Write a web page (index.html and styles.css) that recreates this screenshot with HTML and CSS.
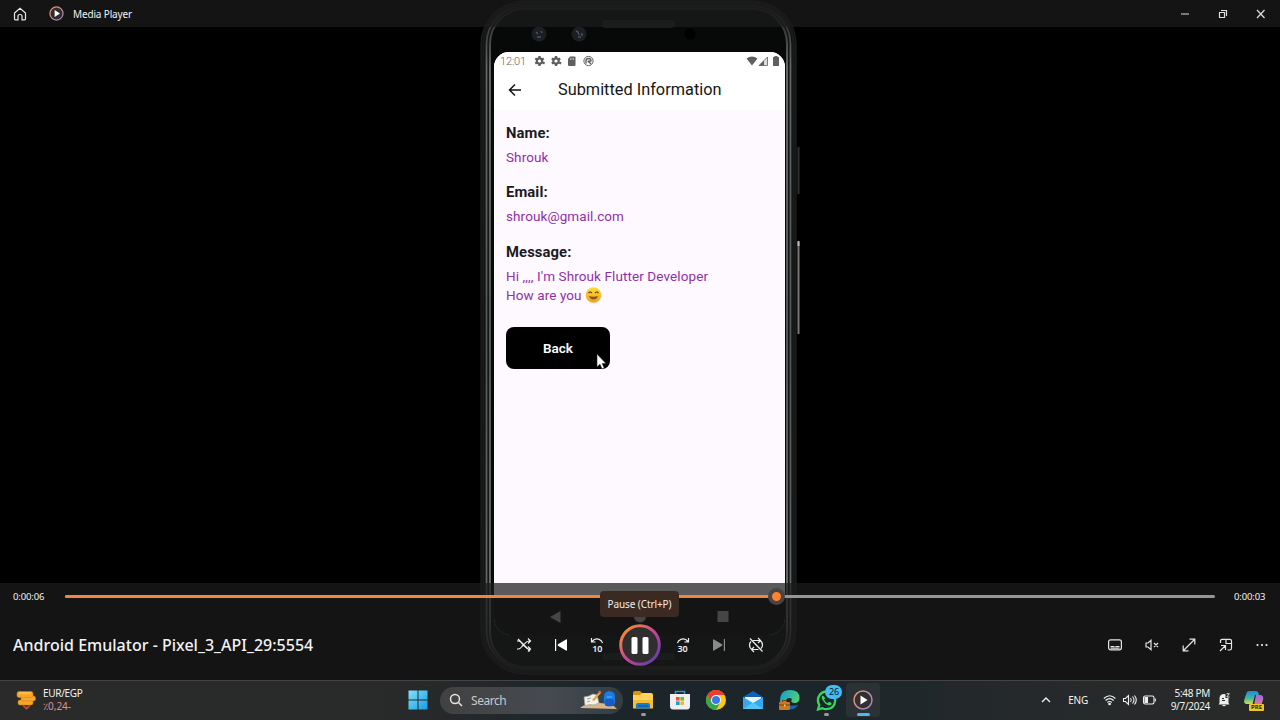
FILE: index.html
```html
<!DOCTYPE html>
<html lang="en">
<head>
<meta charset="utf-8">
<title>Media Player</title>
<link rel="stylesheet" href="styles.css">
</head>
<body>
<main class="window">
  <section class="video">
    <div class="phone">
      <svg class="phone-frame" viewBox="0 0 322 676" fill="none">
        <defs>
          <linearGradient id="rim" x1="0" y1="0" x2="0" y2="1"><stop offset="0" stop-color="#202222"/><stop offset=".09" stop-color="#686a6a"/><stop offset=".5" stop-color="#565959"/><stop offset=".92" stop-color="#686a6a"/><stop offset="1" stop-color="#202222"/></linearGradient>
        </defs>
        <rect x="2" y="1" width="315" height="673" rx="43" fill="#101111" stroke="#222424"/>
        <rect x="4.500" y="3.500" width="310" height="668" rx="41" stroke="#191b1b" stroke-width="2"/>
        <rect x="7.500" y="6" width="304" height="663" rx="38" fill="#161818" stroke="url(#rim)" stroke-width="1.700"/>
        <rect x="11" y="9" width="297" height="658" rx="35" fill="#070808" stroke="url(#rim)" stroke-width="1.900"/>
        <path d="M319.500 147v47" stroke="#303030" stroke-width="2"/>
        <path d="M319.500 242v92" stroke="#777" stroke-width="2"/>
        <path d="M319.500 241v5" stroke="#bbb" stroke-width="2"/>
        <rect x="123" y="20" width="73" height="8" rx="4" fill="#1b1d1d"/>
        <rect x="123" y="653" width="73" height="7" rx="3.500" fill="#1b1d1d"/>
        <g fill="#1b1f24"><circle cx="60" cy="34" r="7.500"/><circle cx="100" cy="34" r="7.500"/></g>
        <path d="M57 32l2 2M62 31l1 2M58 37h4M97 31l2 1 1 3M103 33v3M99 37h3" stroke="#4b5560" stroke-width="1.400"/>
        <circle cx="211" cy="34" r="5.500" fill="#000"/>
      </svg>
      <div class="screen">
        <div class="status">
          <span class="clock">12:01</span>
          <svg width="60" height="12" viewBox="0 0 60 12" fill="#5f5f5f">
            <g id="gear"><circle cx="5.500" cy="6" r="2.700" fill="none" stroke="#5f5f5f" stroke-width="2.200"/><path d="M4.300 1h2.400v2.200H4.300zM4.300 8.800h2.400V11H4.300zM.7 4.400l1.100-1.900 2 1-1 2zM8.200 8.500l1-2 2 1-1.100 1.900zM.7 7.600l2-1 1 2-1.900.9zM7.300 3.500l1.900-1 1.100 1.900-2 1z"/></g>
            <use href="#gear" x="16.500"/>
            <path d="M36 1.500h4.500q1 0 1 1v7.500q0 1-1 1h-5.500q-1 0-1-1V4z"/><path d="M36.500 3v2M38 3v2M39.500 3v2" stroke="#ccc" stroke-width=".7"/>
            <g fill="none" stroke="#5f5f5f"><circle cx="54.500" cy="6" r="4.600"/><path d="M52 8.500V6q0-2.500 2.500-2.500T57 6l-2.500.5L57 9M54.500 5.500v2" stroke-width="1.400"/></g>
          </svg>
          <svg class="signal" width="36" height="12" viewBox="0 0 36 12" fill="#5f5f5f"><path d="M.5 3.500q5.500-4 11 0L6 10.500z"/><path d="M13 10.500 21.500 2v8.500z" fill="#ddd" stroke="#5f5f5f" stroke-width=".8"/><path d="M13 10.500 18 5.500v5z"/><path d="M27 2h1.500V1h3v1H33v9h-6z"/></svg>
        </div>
        <div class="appbar">
          <svg width="14" height="14" viewBox="0 0 14 14" fill="none" stroke="#111" stroke-width="1.500"><path d="M13 7H2M7 1.500 1.500 7 7 12.500"/></svg>
          <h1>Submitted Information</h1>
        </div>
        <div class="content">
          <h2>Name:</h2><p>Shrouk</p>
          <h2>Email:</h2><p class="email">shrouk@gmail.com</p>
          <h2>Message:</h2><p class="message">Hi ,,,, I'm Shrouk Flutter Developer<br>How are you <svg class="emoji" width="17" height="16" viewBox="0 0 17 16"><defs><linearGradient id="face" x1="0" y1="0" x2="0" y2="1"><stop stop-color="#ffdf36"/><stop offset="1" stop-color="#eea022"/></linearGradient></defs><circle cx="8.500" cy="8" r="7.800" fill="url(#face)"/><path d="M3.500 6q1.700-2 3.400 0M10.100 6q1.700-2 3.400 0" fill="none" stroke="#58391d" stroke-width="1.200"/><path d="M4 9q4.500 1.500 9 0-1.200 3.600-4.500 3.600T4 9z" fill="#8a5320"/></svg></p>
          <button class="back">Back</button>
        </div>
        <div class="nav"><svg width="179" height="14" viewBox="0 0 179 14" fill="#b0b0b0"><path d="M0 7 10.500 1v12z"/><circle cx="90" cy="6.500" r="6"/><path d="M167.500 1h11v11h-11z"/></svg></div>
      </div>
      <svg class="cursor" width="10" height="17" viewBox="0 0 10 17"><path d="M1 1v13l3-2.700 2 4.700 2.200-1-2-4.400H10z" fill="#fff" stroke="#222" stroke-width=".6"/></svg>
    </div>
  </section>

  <header class="titlebar">
    <svg class="home" width="14" height="14" viewBox="0 0 14 14" fill="none" stroke="#e8e8e8" stroke-width="1.200"><path d="M1.500 6 7 1.300 12.500 6v6q0 .8-.8.800H9V9q0-1.500-2-1.500T5 9v3.800H2.300q-.8 0-.8-.8z"/></svg>
    <svg class="app-icon" width="15" height="15" viewBox="0 0 24 24"><defs><linearGradient id="brand" x1="0" y1="0" x2="1" y2="1"><stop offset=".1" stop-color="#f58b35"/><stop offset=".5" stop-color="#c74695"/><stop offset=".95" stop-color="#5a3eaf"/></linearGradient><linearGradient id="soft" x1="0" y1="0" x2="1" y2="1"><stop stop-color="#ee965b"/><stop offset=".6" stop-color="#bd87a7"/><stop offset="1" stop-color="#8a83c1"/></linearGradient></defs><circle cx="12" cy="12" r="10.500" fill="#312d2d" stroke="url(#soft)" stroke-width="2"/><path d="M9 6.500 17.500 12 9 17.500z" fill="#fff"/></svg>
    <span class="app-name">Media Player</span>
    <svg class="window-buttons" width="84" height="10" viewBox="0 0 84 10" fill="none" stroke="#ddd"><path d="M0 5h8"/><path d="M38.500 3.500h5v5h-5zM40 1.500h5.500v5.500" stroke-width="1.200"/><path d="m76 1 7.500 8M83.500 1 76 9" stroke-width="1.200"/></svg>
  </header>

  <section class="player">
    <div class="seek">
      <time>0:00:06</time>
      <div class="track"><div class="played"><span class="thumb"></span></div></div>
      <time class="remaining">0:00:03</time>
    </div>
    <div class="controls">
      <div class="media-title">Android Emulator - Pixel_3_API_29:5554</div>
      <div class="transport">
        <svg width="16" height="16" viewBox="0 0 16 16" fill="none" stroke="#eee" stroke-width="1.200"><path d="M1 4h1.500Q4 4 6 6.500l3 3.200q2 2.300 4 2.300h1M1 12h1.500Q4 12 6 9.500l3-3.200Q11 4 13 4h1M12 1.500 14.500 4 12 6.500M12 9.500l2.500 2.500-2.500 2.500M2 2l12 12"/></svg>
        <svg width="16" height="16" viewBox="0 0 16 16" fill="#fff"><path d="M2 2h1.200v12H2zM14 3v10q0 1-1 .5L5 8.700q-.8-.7 0-1.400l8-4.800q1-.5 1 .5z"/></svg>
        <span class="skip"><svg width="14" height="7" viewBox="0 0 14 7"><path d="M1.500 1v4h4M2 4.500q4.500-5 9.500-.5l1 2"/></svg><b>10</b></span>
        <span class="pause"><svg width="42" height="42" viewBox="0 0 42 42"><circle cx="21" cy="21" r="19.300" fill="#302e2e" stroke="url(#brand)" stroke-width="3"/><rect x="12.500" y="13" width="6" height="17" rx="1.500" fill="#fff"/><rect x="23.500" y="13" width="6" height="17" rx="1.500" fill="#fff"/></svg><span class="tooltip">Pause (Ctrl+P)</span></span>
        <span class="skip"><svg width="14" height="7" viewBox="0 0 14 7"><path d="M12.500 1v4h-4M12 4.500q-4.500-5-9.500-.5l-1 2"/></svg><b>30</b></span>
        <svg width="16" height="16" viewBox="0 0 16 16" fill="#8a8a8a"><path d="M12.800 2H14v12h-1.200zM2 3v10q0 1 1 .5l8-4.800q.8-.7 0-1.400L3 2.500Q2 2 2 3z"/></svg>
        <svg width="16" height="16" viewBox="0 0 16 16" fill="none" stroke="#eee" stroke-width="1.200"><path d="M5 3.500h6.500q3 1 3 4.500 0 2-1.500 3.500M10 1l2.500 2.500L10 6M10.500 12.500h-6q-3-1-3-4.500 0-2 1.500-3.500M6 10l-2.500 2.500L6 15M2 1.500l12.500 13"/></svg>
      </div>
      <div class="tools">
        <svg width="14" height="12" viewBox="0 0 14 12" fill="none" stroke="#e5e5e5" stroke-width="1.200"><rect x=".6" y=".8" width="12.800" height="10" rx="2"/><path d="M2.500 7.500h4M7.500 7.500h4M2.500 9.200h9"/></svg>
        <svg width="14" height="12" viewBox="0 0 14 12" fill="none" stroke="#e5e5e5" stroke-width="1.200"><path d="M1 4h2l3-2.700v9.400L3 8H1zM9 4l4 4M13 4 9 8"/></svg>
        <svg width="14" height="14" viewBox="0 0 14 14" fill="none" stroke="#e5e5e5" stroke-width="1.200"><path d="M1.500 12.500l11-11M7.500 1.200h5.300v5.300M1.200 7.500v5.300h5.300"/></svg>
        <svg width="14" height="14" viewBox="0 0 14 14" fill="none" stroke="#e5e5e5" stroke-width="1.200"><path d="M1.500 5V3q0-1.700 1.700-1.700h7.600q1.700 0 1.700 1.700v7q0 2-1.700 2H8.500M7 1.500v4h5.500M1 13l5-5M2 7.500h4.500V12"/></svg>
        <svg width="12" height="4" viewBox="0 0 12 4" fill="#eee"><circle cx="1.500" cy="2" r="1.100"/><circle cx="6" cy="2" r="1.100"/><circle cx="10.500" cy="2" r="1.100"/></svg>
      </div>
    </div>
  </section>

  <footer class="taskbar">
    <div class="widget">
      <svg width="20" height="21" viewBox="0 0 20 21"><path d="m7 15 3.500 2 3.500-2v1.500L10.500 20 7 16.500z" fill="#c74a20"/><g fill="#f5a62b" stroke="#d78218" stroke-width=".5"><rect x="2" y="10" width="15" height="5" rx="2"/><rect x="5" y="6" width="14.500" height="5" rx="2"/><rect x="1" y="1.500" width="16" height="6" rx="2"/></g><path d="M3 3h12" stroke="#ffd064"/></svg>
      <div class="rates"><span>EUR/EGP</span><span class="down">٪0,24-</span></div>
    </div>
    <div class="apps">
      <svg width="20" height="20" viewBox="0 0 20 20"><defs><linearGradient id="win" x1="0" y1="0" x2="1" y2="1"><stop stop-color="#83e3fb"/><stop offset="1" stop-color="#169be5"/></linearGradient></defs><path d="M.5.500h9v9h-9zM10.500.500h9v9h-9zM.5 10.500h9v9h-9zM10.500 10.500h9v9h-9z" fill="url(#win)"/></svg>
      <div class="search"><svg width="14" height="14" viewBox="0 0 14 14" fill="none" stroke="#e5e5e5" stroke-width="1.500"><circle cx="6" cy="6" r="4.500"/><path d="M9.500 9.500 13 13"/></svg><span>Search</span>
        <svg class="school" width="40" height="22" viewBox="0 0 40 22"><path d="M1 19q5-5 19-5t18 6z" fill="#d6b68a"/><path d="m5 8 5-1 4-2 4 1 2 8-5 2-4-.5-5 1z" fill="#f3f1e9" stroke="#9aa696" stroke-width=".7"/><path d="m8 10 4-1M8 13l3-1" stroke="#87ac9b"/><path d="m13 11 7-8 2 1-7 8z" fill="#f0a12c"/><path d="m19 3 1.500-1.500 2 1.500L21 4.500z" fill="#ef5d55"/><path d="M29 3q1-2.500 3 0" fill="none" stroke="#2459c8"/><rect x="25" y="2.500" width="11" height="15" rx="4.500" fill="#187ce5"/><rect x="26" y="10" width="9" height="7" rx="2" fill="#1b59c7"/><path d="M28 8h5" stroke="#69b8ff"/></svg>
      </div>
      <div class="app dot"><svg width="20" height="20" viewBox="0 0 20 20"><path d="M0 3q0-2 2-2h5l2 2v4H0z" fill="#d99410"/><path d="M0 5h7l2-2h9q2 0 2 2v13H0z" fill="#ffd35a"/><path d="M0 10h20v8.500H0z" fill="#f4bc38"/><path d="M3 18.500V15q0-2 2-2h10q2 0 2 2v3.500z" fill="#147fd0"/><path d="M5 16h10" stroke="#0a539d"/></svg></div>
      <div class="app"><svg width="20" height="20" viewBox="0 0 20 20"><path d="M5.500 5V1.500h9V5" fill="none" stroke="#289ad3" stroke-width="1.500"/><path d="M0 4h20v12q0 3.500-3 3.500H3q-3 0-3-3.500z" fill="#efefef"/><path d="M6 7h3.600v3.600H6z" fill="#f04f2f"/><path d="M10.400 7H14v3.600h-3.600z" fill="#78b928"/><path d="M6 11.400h3.600V15H6z" fill="#159edc"/><path d="M10.400 11.400H14V15h-3.600z" fill="#f7b51f"/></svg></div>
      <div class="app"><svg width="20" height="20" viewBox="0 0 20 20"><circle cx="10" cy="10" r="10" fill="#fbc719"/><path d="M1.340 5A10 10 0 0 1 18.660 5H10L5.670 12.500z" fill="#e93f32"/><path d="M1.340 5A10 10 0 0 0 10 20l4.330-7.500H5.670z" fill="#32a852"/><circle cx="10" cy="10" r="5" fill="#fff"/><circle cx="10" cy="10" r="4" fill="#3979e8"/></svg></div>
      <div class="app"><svg width="20" height="20" viewBox="0 0 20 20"><path d="M0 7 10 1l10 6v4H0z" fill="#1260b6"/><path d="M2 7h16v6H2z" fill="#e7f5ff"/><path d="M0 7l10 6 10-6v12H0z" fill="#36a9ec"/><path d="M0 19 10 12.500 20 19z" fill="#52c6fb"/></svg></div>
      <div class="app"><svg width="21" height="20" viewBox="0 0 21 20"><defs><linearGradient id="edge" x1="0" y1="0" x2="1" y2=".5"><stop stop-color="#139bd8"/><stop offset="1" stop-color="#52d36b"/></linearGradient></defs><path d="M1 11Q1 0 11 0q9.500 0 9.500 8 0 5-5 5-4 0-3-3 1-2-2-2-4 0-3.500 5 .5 4 6 6Q1 20 1 11z" fill="url(#edge)"/><path d="M7 10q0 8 12 5-3 5-8 4-5-2-4-9z" fill="#1765b5"/><rect x="0" y="12" width="11" height="8" rx="1" fill="#c87924"/><path d="M3.500 12v-1.500h4V12M0 15h11" fill="none" stroke="#72400f"/><path d="M5 14.500h1.500v2H5z" fill="#f7c76b"/></svg></div>
      <div class="app dot whatsapp"><svg width="21" height="21" viewBox="0 0 21 21" fill="none"><path d="M2 19.500 3.300 15Q1 11 2.500 7 5 1.500 10.500 1.500q8.500.5 8.700 9-.5 8.500-9 8.700-2.300 0-4-1z" stroke="#35d85c" stroke-width="2.300"/><path d="M7 5.500q-2 1-.8 3.800 2.800 5.200 7 6.200 2.500-.3 2.500-2.500L13 11.700l-1.500 1.500Q9 12 8 9.500L9.200 8z" fill="#35d85c"/></svg><span class="badge">26</span></div>
      <div class="app active"><svg width="20" height="20" viewBox="0 0 24 24"><circle cx="12" cy="12" r="10.800" fill="#302f32" stroke="url(#soft)" stroke-width="1.800"/><path d="M9 6.500 17.500 12 9 17.500z" fill="#fff"/></svg></div>
    </div>
    <div class="tray">
      <svg width="10" height="6" viewBox="0 0 10 6" fill="none" stroke="#eee" stroke-width="1.400"><path d="m1 5 4-4 4 4"/></svg>
      <span class="lang">ENG</span>
      <svg width="54" height="12" viewBox="0 0 54 12" fill="none" stroke="#eee" stroke-width="1.100"><path d="M.8 4.500q6-5.500 11.600 0M2.500 6.500q4.200-3.800 8.200 0M4.300 8.500q2.300-2 4.500 0"/><circle cx="6.600" cy="10" r=".8" fill="#eee"/><path d="M20.500 4.500h2l3-3v9l-3-3h-2zM27.500 4q1.500 2 0 4M29.500 2.500q3 3.500 0 7M31.500 1.500q3.500 4.500 0 9"/><rect x="40.500" y="2" width="10.500" height="8" rx="1.700"/><path d="M42 3.500h2.500v5H42z" fill="#eee"/><path d="M52.300 4.500v3"/></svg>
      <div class="date"><span>5:48 PM</span><span>9/7/2024</span></div>
      <svg width="12" height="14" viewBox="0 0 12 14" fill="#eee"><path d="M1.500 10V5Q2 1 6 1q4 0 4.500 4v5l1 1.500H.5zM4 12h4q-2 2.500-4 0z"/><path d="M4 5.500h2M4 7.500h3" fill="none" stroke="#292929"/><path d="M7.500 0H12v5H7.500z" fill="#292929"/><path d="M8.500.7h2.800L8.800 4h2.700" fill="none" stroke="#eee" stroke-width=".9"/></svg>
      <div class="copilot"><svg width="20" height="20" viewBox="0 0 20 20"><defs><linearGradient id="co" x1="0" y1="0" x2="0" y2="1"><stop stop-color="#2487dc"/><stop offset=".6" stop-color="#45bc9c"/><stop offset="1" stop-color="#e7df3b"/></linearGradient><linearGradient id="cp" x1="0" y1="0" x2="0" y2="1"><stop stop-color="#a364e2"/><stop offset="1" stop-color="#f28478"/></linearGradient></defs><path d="M5 1h7q2 0 2.500 2L15 5h-4L8.500 14H3q-4 0-2.500-5l2-6Q3 1 5 1z" fill="url(#co)"/><path d="M12 5h5q3 1 2 5l-2 6q-1 3-4 3H7q3-1 3-4z" fill="url(#cp)"/></svg><span class="pre">PRE</span></div>
    </div>
  </footer>
</main>
</body>
</html>
```
FILE: styles.css
```css
* { box-sizing: border-box; }
body { margin: 0; background: #000; font-family: "Noto Sans", sans-serif; color: #f2f2f2; }
svg { display: block; flex: none; }
.window { position: relative; width: 1280px; height: 720px; overflow: hidden; display: flex; flex-direction: column; justify-content: space-between; }
.video { position: absolute; inset: 0 0 40px; display: flex; justify-content: center; background: #000; }
.phone { position: relative; width: 322px; height: 676px; padding: 52px 0 0 15px; }
.phone-frame { position: absolute; left: 0; top: 0; width: 322px; height: 676px; }
.screen { position: relative; width: 291px; height: 583px; border-radius: 15px 15px 17px 17px; overflow: hidden; background: #fef9ff; display: flex; flex-direction: column; font-family: Roboto, sans-serif; }
.status { height: 18px; padding: 0 3px 0 6px; display: flex; align-items: center; background: #fff; color: #666; }
.clock { width: 34px; font-size: 11px; font-weight: 300; letter-spacing: -.15px; white-space: nowrap; }
.signal { margin-left: auto; }
.appbar { height: 40px; padding-left: 14px; display: flex; align-items: center; gap: 36px; background: #fff; }
.appbar h1 { margin: -1px 0 0; color: #151515; font-size: 16.300px; font-weight: 400; letter-spacing: .02px; white-space: nowrap; }
.content { flex: 1; padding: 13px 12px 0; }
.content h2 { margin: 0; font-size: 14.800px; line-height: 21px; font-weight: 700; letter-spacing: .1px; color: #1c191f; }
.content p { margin: 4px 0 15px; font-size: 13.500px; line-height: 19.300px; letter-spacing: .1px; color: #9130a7; white-space: nowrap; }
.content .message { margin-bottom: 22px; }
.emoji { display: inline-block; vertical-align: -3px; }
.back { display: block; width: 104px; height: 42px; padding: 0; border: 0; border-radius: 8px; background: #000; color: #fff; font: 600 13.500px Roboto, sans-serif; letter-spacing: 0; }
.nav { height: 37px; padding-left: 56px; background: #000; display: flex; align-items: center; }
.cursor { position: absolute; left: 117px; top: 353px; }
.titlebar { position: relative; height: 27px; padding: 0 15px 0 13px; display: flex; align-items: center; background: rgba(28,28,28,.72); }
.app-icon { margin-left: 22px; }
.app-name { margin-left: 9px; font-size: 10px; letter-spacing: -.15px; }
.window-buttons { margin-left: auto; }
.player { position: relative; height: 97px; margin-top: auto; background: rgba(28,28,28,.72); display: flex; flex-direction: column; }
.seek { height: 27px; padding: 0 13px; display: flex; align-items: center; font-size: 9.500px; }
.seek time { width: 52px; letter-spacing: -.12px; }
.seek .remaining { padding-left: 19px; white-space: nowrap; }
.track { flex: 1; height: 3px; border-radius: 2px; background: #999596; }
.played { position: relative; width: 712px; height: 3px; border-radius: 2px; background: #f28541; }
.thumb { position: absolute; right: -8px; top: -7px; width: 17px; height: 17px; border: 4px solid #454545; border-radius: 50%; background: #ff8132; }
.controls { height: 70px; padding: 0 12px 0 13px; display: grid; grid-template-columns: 503px 1fr 160px; align-items: center; }
.media-title { margin-top: -1px; font-size: 16px; font-weight: 500; letter-spacing: .01px; white-space: nowrap; }
.transport { width: 248px; display: flex; align-items: center; justify-content: space-between; }
.skip { width: 16px; height: 16px; display: flex; flex-direction: column; align-items: center; }
.skip svg { fill: none; stroke: #eee; stroke-width: 1.200; }
.skip b { font-size: 9px; line-height: 9px; font-weight: 600; }
.pause { position: relative; margin: 0 -7px; }
.tooltip { position: absolute; left: -19px; top: -33px; width: 79px; height: 26px; border-radius: 4px; background: #3b2a22; color: #f2ece8; font-size: 10px; line-height: 26px; letter-spacing: -.1px; text-align: center; white-space: nowrap; }
.tools { display: flex; align-items: center; justify-content: space-between; }
.taskbar { position: relative; height: 40px; border-top: 1px solid #444; background: linear-gradient(90deg,#2a2a2a 0%,#292a2a 30%,#1c262a 47%,#1c262a 65%,#26292b 82%,#292929); display: grid; grid-template-columns: 408px 1fr auto; align-items: center; padding-bottom: 1px; }
.widget { padding-left: 16px; display: flex; align-items: center; gap: 7px; }
.rates { display: flex; flex-direction: column; font-size: 10px; line-height: 13px; letter-spacing: -.3px; }
.down { color: #df8f98; }
.apps { height: 38px; display: flex; align-items: center; }
.search { width: 183px; height: 27px; margin: 0 0 0 12px; padding: 0 4px 0 9px; border-radius: 14px; display: flex; align-items: center; gap: 8px; background: linear-gradient(90deg,#414141,#464a50 60%,#333e43); color: #c9c9c9; font-size: 12px; letter-spacing: -.6px; }
.search span { font-size: 12px; letter-spacing: -.45px; }
.school { margin-left: auto; }
.app { position: relative; width: 34px; height: 34px; margin-right: 2.700px; display: flex; align-items: center; justify-content: center; }
.search + .app { margin-left: 3px; }
.app.active { background: #2b3236; border-radius: 4px; }
.dot::after, .active::after { content: ""; position: absolute; bottom: 1px; width: 5px; height: 3px; border-radius: 2px; background: #9a9a9a; }
.active::after { width: 13px; background: #50b9e9; }
.badge { position: absolute; right: 1px; top: 2px; width: 17px; height: 14px; border-radius: 7px; background: #45baf5; color: #08202d; font-size: 9px; line-height: 14px; text-align: center; letter-spacing: -.2px; }
.tray { display: flex; align-items: center; padding-right: 16px; }
.lang { margin: 0 15px 0 17px; font-size: 10px; letter-spacing: -.25px; }
.date { width: 53px; display: flex; flex-direction: column; align-items: flex-end; font-size: 10px; line-height: 13px; letter-spacing: -.3px; }
.date + svg { margin-left: 8px; }
.copilot { position: relative; margin-left: 14px; }
.pre { position: absolute; left: 5px; bottom: -1px; width: 15px; height: 7px; border-radius: 1px; background: #f5c329; color: #322709; font-size: 6px; line-height: 7px; font-weight: 700; text-align: center; }
```
